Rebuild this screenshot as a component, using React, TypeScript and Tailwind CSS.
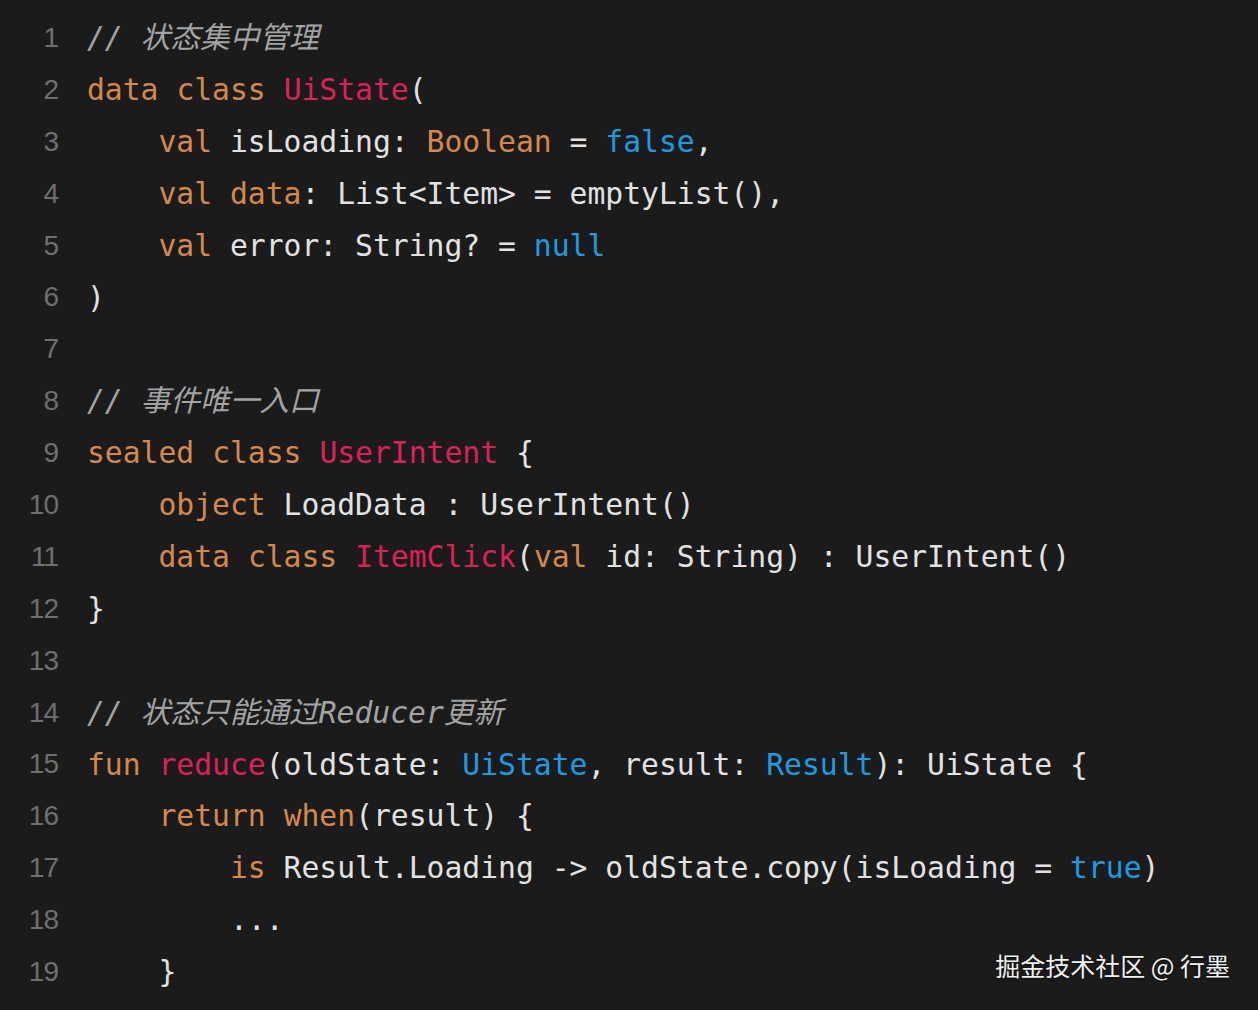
type Tok = [string, string?];

// k = keyword (orange), t = type name (crimson), b = blue literal/type, c = comment
const K = "text-[#d4894b]";
const T = "text-[#dc2159]";
const B = "text-[#1d9be0]";
const C = "text-[#a3a3a3] italic";

const lines: Tok[][] = [
  [["// 状态集中管理", C]],
  [["data", K], [" "], ["class", K], [" "], ["UiState", T], ["("]],
  [["    "], ["val", K], [" isLoading: "], ["Boolean", K], [" = "], ["false", B], [","]],
  [["    "], ["val", K], [" "], ["data", K], [": List<Item> = emptyList(),"]],
  [["    "], ["val", K], [" error: String? = "], ["null", B]],
  [[")"]],
  [],
  [["// 事件唯一入口", C]],
  [["sealed", K], [" "], ["class", K], [" "], ["UserIntent", T], [" {"]],
  [["    "], ["object", K], [" LoadData : UserIntent()"]],
  [["    "], ["data", K], [" "], ["class", K], [" "], ["ItemClick", T], ["("], ["val", K], [" id: String) : UserIntent()"]],
  [["}"]],
  [],
  [["// 状态只能通过Reducer更新", C]],
  [["fun", K], [" "], ["reduce", T], ["(oldState: "], ["UiState", B], [", result: "], ["Result", B], ["): UiState {"]],
  [["    "], ["return", K], [" "], ["when", K], ["(result) {"]],
  [["        "], ["is", K], [" Result.Loading -> oldState.copy(isLoading = "], ["true", B], [")"]],
  [["        ..."]],
  [["    }"]],
];

export default function App() {
  return (
    <div className="relative w-[1258px] h-[1010px] overflow-hidden bg-[#1b1b1b] pt-[12px]">
      {lines.map((toks, i) => (
        <div key={i} className="flex h-[51.9px] items-center">
          <div className="w-[58px] text-right text-[28px] text-[#6f6f6f] font-['Liberation_Sans',sans-serif] tracking-[-1px]">
            {i + 1}
          </div>
          <pre className="ml-[29px] text-[29.7px] leading-none text-[#e2e2e2] font-['DejaVu_Sans_Mono','Noto_Sans_CJK_SC',monospace]">
            {toks.map((t, j) => (
              <span key={j} className={t[1]}>
                {t[0]}
              </span>
            ))}
          </pre>
        </div>
      ))}
      <div className="absolute right-[28px] bottom-[26px] text-[25px] text-[#f0f0f0] font-['Noto_Sans_CJK_SC',sans-serif] [text-shadow:0_1px_2px_rgba(0,0,0,0.6)]">
        掘金技术社区 @ 行墨
      </div>
    </div>
  );
}
